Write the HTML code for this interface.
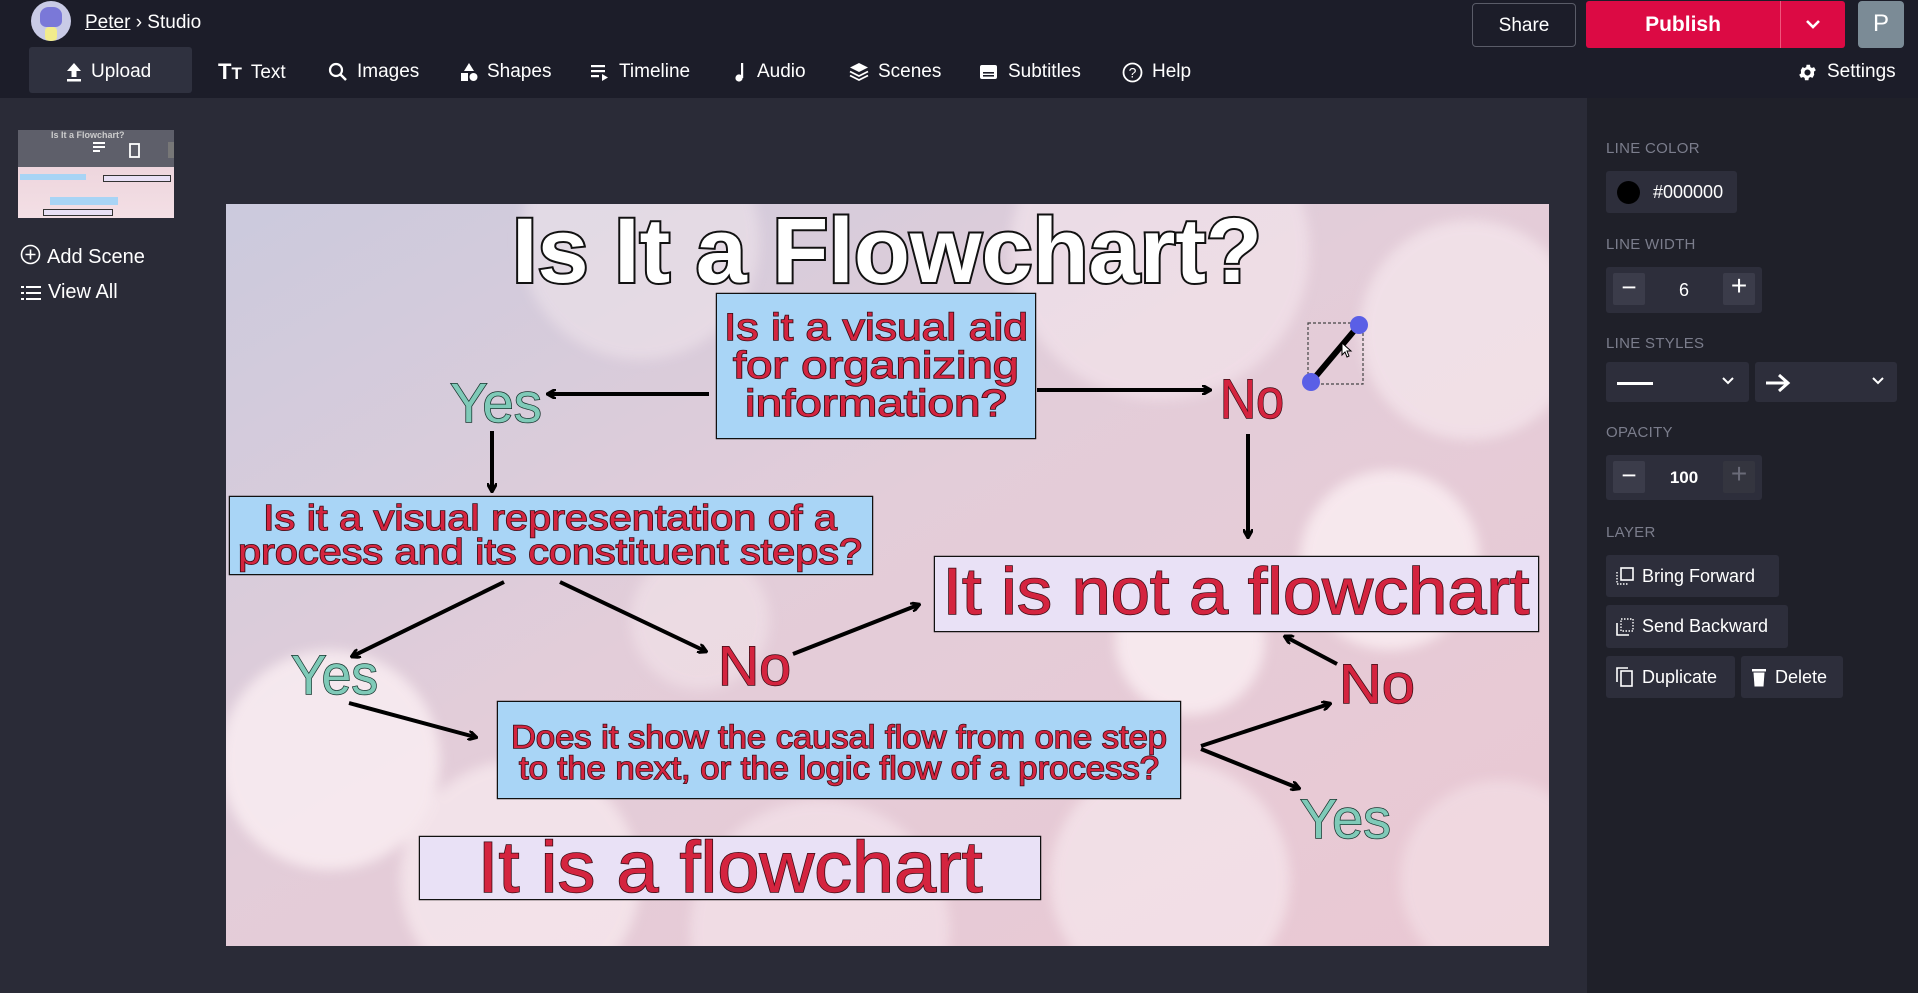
<!DOCTYPE html>
<html style="overflow:hidden;width:1918px;height:993px"><head><meta charset="utf-8"><style>
*{box-sizing:border-box;margin:0;padding:0}
body{width:1918px;height:993px;overflow:hidden;background:#2a2b37;font-family:"Liberation Sans","DejaVu Sans",sans-serif;color:#fff;position:relative}
.top{position:absolute;left:0;top:0;width:1918px;height:98px;background:#1c1d29}
.abs{position:absolute}
.menu{position:absolute;top:60px;font-size:19px;color:#fff;display:flex;align-items:center;gap:9px;line-height:24px}
.menu svg{fill:#fff}
.rp{position:absolute;left:1587px;top:98px;width:331px;height:895px;background:#1f2029}
.lbl{position:absolute;left:1606px;font-size:15px;color:#7b7d8c;letter-spacing:.3px}
.box{position:absolute;background:#2d2e3b;border-radius:3px}
.btn{position:absolute;background:#2d2e3b;border-radius:3px;font-size:18px;display:flex;align-items:center;gap:8px;padding-left:10px}
.sq{position:absolute;width:32px;height:32px;background:#3b3c4a;border-radius:2px;top:6px}
</style></head><body>
<div class="top"></div>
<div class="abs" style="left:31px;top:1px;width:40px;height:40px;border-radius:50%;background:#c9cbe6;overflow:hidden">
<div class="abs" style="left:9px;top:6px;width:22px;height:20px;background:#7a78d8;border-radius:40% 40% 30% 30%"></div>
<div class="abs" style="left:14px;top:26px;width:12px;height:14px;background:#f2ec8c;border-radius:4px"></div>
</div>
<div class="abs" style="left:85px;top:12px;font-size:19px"><span style="text-decoration:underline">Peter</span> › Studio</div>
<div class="abs" style="left:29px;top:47px;width:163px;height:46px;background:#2f313f;border-radius:3px"></div>
<div class="menu" style="left:66px"><svg width="16" height="20" viewBox="0 0 16 20"><path d="M8 1 L15 9 H10.5 V15 H5.5 V9 H1Z"/><rect x="1" y="17" width="14" height="2.5"/></svg>Upload</div>
<div class="menu" style="left:218px"><span style="font-weight:bold;font-size:22px">T<span style="font-size:17px">T</span></span>Text</div>
<div class="menu" style="left:328px"><svg width="20" height="20" viewBox="0 0 20 20"><circle cx="8" cy="8" r="6" fill="none" stroke="#fff" stroke-width="2.2"/><path d="M12 12 L18 18" stroke="#fff" stroke-width="2.5"/></svg>Images</div>
<div class="menu" style="left:460px"><svg width="18" height="20" viewBox="0 0 18 20"><path d="M9 1 L14 9 H4Z"/><rect x="1" y="11" width="7" height="8"/><circle cx="13.5" cy="15" r="4"/></svg>Shapes</div>
<div class="menu" style="left:590px"><svg width="20" height="20" viewBox="0 0 20 20"><rect x="1" y="3" width="14" height="2.2"/><rect x="1" y="8" width="14" height="2.2"/><rect x="1" y="13" width="8" height="2.2"/><path d="M12 12 L18 15.5 L12 19Z"/></svg>Timeline</div>
<div class="menu" style="left:734px"><svg width="14" height="20" viewBox="0 0 14 20"><rect x="7" y="1" width="2.2" height="15"/><circle cx="5" cy="16" r="3.6"/></svg>Audio</div>
<div class="menu" style="left:849px"><svg width="20" height="20" viewBox="0 0 20 20"><path d="M10 1 L19 5.5 L10 10 L1 5.5Z"/><path d="M1 9.5 L10 14 L19 9.5 M1 13.5 L10 18 L19 13.5" fill="none" stroke="#fff" stroke-width="1.8"/></svg>Scenes</div>
<div class="menu" style="left:979px"><svg width="20" height="18" viewBox="0 0 20 18"><rect x="1" y="2" width="17" height="14" rx="2"/><rect x="4" y="9" width="11" height="1.6" fill="#1c1d29"/><rect x="4" y="12" width="11" height="1.6" fill="#1c1d29"/></svg>Subtitles</div>
<div class="menu" style="left:1122px"><svg width="21" height="21" viewBox="0 0 21 21"><circle cx="10.5" cy="10.5" r="9" fill="none" stroke="#fff" stroke-width="1.8"/><text x="10.5" y="15.5" font-size="14" text-anchor="middle" fill="#fff" font-family="Liberation Sans">?</text></svg>Help</div>
<div class="menu" style="left:1797px"><svg width="21" height="21" viewBox="0 0 24 24"><path fill="#fff" d="M19.4 13a7.5 7.5 0 0 0 0-2l2.1-1.6-2-3.5-2.5 1a7 7 0 0 0-1.7-1l-.4-2.7h-4l-.4 2.7a7 7 0 0 0-1.7 1l-2.5-1-2 3.5L4.6 11a7.5 7.5 0 0 0 0 2l-2.1 1.6 2 3.5 2.5-1a7 7 0 0 0 1.7 1l.4 2.7h4l.4-2.7a7 7 0 0 0 1.7-1l2.5 1 2-3.5zM12 15.5A3.5 3.5 0 1 1 12 8.5a3.5 3.5 0 0 1 0 7z"/></svg>Settings</div>
<div class="abs" style="left:1472px;top:3px;width:104px;height:44px;border:1.5px solid #5a5c68;border-radius:4px;font-size:19px;text-align:center;line-height:43px">Share</div>
<div class="abs" style="left:1586px;top:1px;width:259px;height:47px;background:#dc0a44;border-radius:3px"></div>
<div class="abs" style="left:1780px;top:1px;width:1px;height:47px;background:#f0557c"></div>
<div class="abs" style="left:1586px;top:13px;width:194px;text-align:center;font-size:21px;font-weight:bold">Publish</div>
<svg class="abs" style="left:1805px;top:18px" width="16" height="12" viewBox="0 0 16 12"><path d="M2 3 L8 9 L14 3" fill="none" stroke="#fff" stroke-width="2.6"/></svg>
<div class="abs" style="left:1858px;top:1px;width:46px;height:47px;background:#7b8b96;border-radius:4px;font-size:24px;text-align:center;line-height:45px">P</div>
<div class="abs" style="left:18px;top:130px;width:156px;height:88px;background:linear-gradient(#eacfd8,#f3dfe5);overflow:hidden">
<div class="abs" style="left:0;top:0;width:156px;height:37px;background:#5e5f6a"></div>
<div class="abs" style="left:33px;top:0;font-size:9px;color:#ccc;font-weight:bold">Is It a Flowchart?</div>
<div class="abs" style="left:2px;top:44px;width:66px;height:6px;background:#a8d4f5"></div>
<div class="abs" style="left:85px;top:45px;width:68px;height:7px;background:#e8e0f5;border:1px solid #333"></div>
<div class="abs" style="left:32px;top:67px;width:68px;height:8px;background:#a8d4f5"></div>
<div class="abs" style="left:25px;top:79px;width:70px;height:7px;background:#e8e0f5;border:1px solid #333"></div>
<svg class="abs" style="left:60px;top:8px" width="100" height="24"><g fill="#fff"><rect x="15" y="4" width="12" height="2"/><rect x="15" y="8" width="12" height="2"/><rect x="15" y="12" width="7" height="2"/></g><rect x="52" y="6" width="9" height="13" fill="none" stroke="#fff" stroke-width="1.8"/><rect x="90" y="4" width="12" height="16" fill="#777"/></svg>
</div>
<div class="abs" style="left:20px;top:240px;font-size:20px;display:flex;gap:6px;align-items:center"><svg width="21" height="21"><circle cx="10.5" cy="10.5" r="9" fill="none" stroke="#fff" stroke-width="1.6"/><path d="M10.5 5.5v10M5.5 10.5h10" stroke="#fff" stroke-width="1.6"/></svg><span style="margin-top:6px">Add Scene</span></div>
<div class="abs" style="left:21px;top:281px;font-size:20px;display:flex;gap:7px;align-items:center"><svg width="20" height="18"><g fill="#fff"><rect x="0" y="2" width="3" height="2"/><rect x="5" y="2" width="15" height="2"/><rect x="0" y="8" width="3" height="2"/><rect x="5" y="8" width="15" height="2"/><rect x="0" y="14" width="3" height="2"/><rect x="5" y="14" width="15" height="2"/></g></svg>View All</div>
<div class="rp"></div>
<div class="lbl" style="top:140px">LINE COLOR</div>
<div class="box" style="left:1606px;top:171px;width:131px;height:42px"></div>
<div class="abs" style="left:1617px;top:181px;width:23px;height:23px;border-radius:50%;background:#000"></div>
<div class="abs" style="left:1653px;top:182px;font-size:18px">#000000</div>
<div class="lbl" style="top:236px">LINE WIDTH</div>
<div class="box" style="left:1606px;top:267px;width:156px;height:46px"><div class="sq" style="left:7px"></div><div class="sq" style="left:117px"></div></div>
<div class="abs" style="left:1613px;top:272px;width:32px;font-size:26px;text-align:center">−</div>
<div class="abs" style="left:1606px;top:280px;width:156px;font-size:18px;text-align:center">6</div>
<div class="abs" style="left:1723px;top:270px;width:32px;font-size:28px;text-align:center">+</div>
<div class="lbl" style="top:335px">LINE STYLES</div>
<div class="box" style="left:1606px;top:362px;width:143px;height:40px"></div>
<div class="abs" style="left:1617px;top:382px;width:36px;height:3px;background:#fff"></div>
<svg class="abs" style="left:1721px;top:376px" width="14" height="10"><path d="M2 2 L7 7 L12 2" fill="none" stroke="#fff" stroke-width="2"/></svg>
<div class="box" style="left:1755px;top:362px;width:142px;height:40px"></div>
<svg class="abs" style="left:1764px;top:372px" width="28" height="22"><path d="M2 11 H24 M15 3 L24 11 L15 19" fill="none" stroke="#fff" stroke-width="3"/></svg>
<svg class="abs" style="left:1871px;top:376px" width="14" height="10"><path d="M2 2 L7 7 L12 2" fill="none" stroke="#fff" stroke-width="2"/></svg>
<div class="lbl" style="top:424px">OPACITY</div>
<div class="box" style="left:1606px;top:455px;width:156px;height:45px"><div class="sq" style="left:7px"></div><div class="sq" style="left:117px;background:#34353f"></div></div>
<div class="abs" style="left:1613px;top:460px;width:32px;font-size:26px;text-align:center">−</div>
<div class="abs" style="left:1606px;top:468px;width:156px;font-size:17px;font-weight:bold;text-align:center">100</div>
<div class="abs" style="left:1723px;top:458px;width:32px;font-size:28px;text-align:center;color:#6a6b78">+</div>
<div class="lbl" style="top:524px">LAYER</div>
<div class="btn" style="left:1606px;top:555px;width:173px;height:42px"><svg width="18" height="18"><rect x="5" y="1" width="12" height="12" fill="none" stroke="#fff" stroke-width="1.6"/><path d="M1 5v12h12" fill="none" stroke="#fff" stroke-width="1.4" stroke-dasharray="1.5 1.5"/></svg>Bring Forward</div>
<div class="btn" style="left:1606px;top:605px;width:182px;height:43px"><svg width="18" height="18"><rect x="5" y="1" width="12" height="12" fill="none" stroke="#fff" stroke-width="1.4" stroke-dasharray="1.5 1.5"/><path d="M1 5v12h12" fill="none" stroke="#fff" stroke-width="1.6"/></svg>Send Backward</div>
<div class="btn" style="left:1606px;top:656px;width:129px;height:42px"><svg width="18" height="20"><rect x="5" y="4" width="11" height="15" fill="none" stroke="#fff" stroke-width="1.6"/><path d="M1 15V1h11" fill="none" stroke="#fff" stroke-width="1.6"/></svg>Duplicate</div>
<div class="btn" style="left:1741px;top:656px;width:102px;height:42px"><svg width="16" height="20"><rect x="1" y="2" width="14" height="2.5" fill="#fff"/><path d="M2.5 5.5h11l-1 14h-9z" fill="#fff"/></svg>Delete</div>
<svg class="abs" style="left:0;top:0;display:block" width="1918" height="993" viewBox="0 0 1918 993">
<defs>
<linearGradient id="bg" x1="0" y1="0" x2="1" y2="1"><stop offset="0" stop-color="#cbcadd"/><stop offset=".45" stop-color="#e3cdd9"/><stop offset="1" stop-color="#eac8d3"/></linearGradient>
<filter id="bl" x="-50%" y="-50%" width="200%" height="200%"><feGaussianBlur stdDeviation="6"/></filter>
<clipPath id="cc"><rect x="226" y="204" width="1323" height="742"/></clipPath>
<marker id="ah" markerWidth="10" markerHeight="10" refX="7" refY="5" orient="auto" markerUnits="userSpaceOnUse"><path d="M0 0 L9 5 L0 10" fill="none" stroke="#000" stroke-width="3"/></marker>
</defs>
<rect x="226" y="204" width="1323" height="742" fill="url(#bg)"/>
<g clip-path="url(#cc)" fill="#fbeff3" opacity=".8" filter="url(#bl)">
<circle cx="640" cy="240" r="120" opacity=".5"/>
<circle cx="1160" cy="250" r="150" opacity=".6"/>
<circle cx="1470" cy="330" r="110" opacity=".7"/>
<circle cx="1390" cy="560" r="90"/>
<circle cx="1190" cy="640" r="75"/>
<circle cx="330" cy="760" r="110"/>
<circle cx="520" cy="880" r="120" opacity=".8"/>
<circle cx="820" cy="930" r="130" opacity=".6"/>
<circle cx="1170" cy="880" r="120" opacity=".7"/>
<circle cx="1500" cy="880" r="100" opacity=".5"/>
<circle cx="700" cy="620" r="70" opacity=".5"/>
</g>
<g font-family="Liberation Sans, sans-serif" font-weight="bold" paint-order="stroke">
<text x="887" y="282" font-size="92" text-anchor="middle" fill="#fff" stroke="#111" stroke-width="4" textLength="750" lengthAdjust="spacingAndGlyphs">Is It a Flowchart?</text>
<rect x="717" y="294" width="318" height="144" fill="#a9d5f6" stroke="#111" stroke-width="2.5"/>
<g fill="#d4243f" stroke="#3a0d16" stroke-width="1.5" font-size="38" text-anchor="middle" font-weight="normal">
<text x="876" y="340" textLength="304" lengthAdjust="spacingAndGlyphs">Is it a visual aid</text>
<text x="876" y="378" textLength="286" lengthAdjust="spacingAndGlyphs">for organizing</text>
<text x="876" y="416" textLength="262" lengthAdjust="spacingAndGlyphs">information?</text>
</g>
<rect x="230" y="497" width="642" height="77" fill="#a9d5f6" stroke="#111" stroke-width="2.5"/>
<g fill="#d4243f" stroke="#3a0d16" stroke-width="1.5" font-size="36" text-anchor="middle" font-weight="normal">
<text x="550" y="530" textLength="574" lengthAdjust="spacingAndGlyphs">Is it a visual representation of a</text>
<text x="550" y="564" textLength="624" lengthAdjust="spacingAndGlyphs">process and its constituent steps?</text>
</g>
<rect x="935" y="557" width="603" height="74" fill="#e9e1f6" stroke="#111" stroke-width="2.5"/>
<text x="1236" y="614" fill="#d4243f" stroke="#3a0d16" stroke-width="1.5" font-size="66" text-anchor="middle" font-weight="normal" textLength="587" lengthAdjust="spacingAndGlyphs">It is not a flowchart</text>
<rect x="498" y="702" width="682" height="96" fill="#a9d5f6" stroke="#111" stroke-width="2.5"/>
<g fill="#d4243f" stroke="#3a0d16" stroke-width="1.5" font-size="32" text-anchor="middle" font-weight="normal">
<text x="839" y="748" textLength="656" lengthAdjust="spacingAndGlyphs">Does it show the causal flow from one step</text>
<text x="839" y="779" textLength="640" lengthAdjust="spacingAndGlyphs">to the next, or the logic flow of a process?</text>
</g>
<rect x="420" y="837" width="620" height="62" fill="#e9e1f6" stroke="#111" stroke-width="2.5"/>
<text x="730" y="892" fill="#d4243f" stroke="#3a0d16" stroke-width="1.5" font-size="72" text-anchor="middle" font-weight="normal" textLength="505" lengthAdjust="spacingAndGlyphs">It is a flowchart</text>
<g fill="#7fcab8" stroke="#17332d" stroke-width="1.5" font-size="56" font-weight="normal">
<text x="450" y="422" textLength="92" lengthAdjust="spacingAndGlyphs">Yes</text>
<text x="291" y="694" textLength="87" lengthAdjust="spacingAndGlyphs">Yes</text>
<text x="1300" y="838" textLength="91" lengthAdjust="spacingAndGlyphs">Yes</text>
</g>
<g fill="#d4243f" stroke="#3a0d16" stroke-width="1.5" font-size="56" font-weight="normal">
<text x="1220" y="418" textLength="64" lengthAdjust="spacingAndGlyphs">No</text>
<text x="718" y="685" textLength="73" lengthAdjust="spacingAndGlyphs">No</text>
<text x="1339" y="703" textLength="76" lengthAdjust="spacingAndGlyphs">No</text>
</g>
</g>
<g stroke="#000" stroke-width="4" marker-end="url(#ah)" fill="none">
<line x1="709" y1="394" x2="549" y2="394"/>
<line x1="1037" y1="390" x2="1209" y2="390"/>
<line x1="492" y1="431" x2="492" y2="490"/>
<line x1="1248" y1="434" x2="1248" y2="536"/>
<line x1="504" y1="582" x2="353" y2="656"/>
<line x1="560" y1="582" x2="705" y2="651"/>
<line x1="793" y1="654" x2="918" y2="605"/>
<line x1="349" y1="703" x2="475" y2="737"/>
<line x1="1201" y1="746" x2="1329" y2="704"/>
<line x1="1201" y1="749" x2="1298" y2="788"/>
<line x1="1337" y1="664" x2="1286" y2="637"/>
</g>
<rect x="1308" y="323" width="55" height="61" fill="none" stroke="#444" stroke-width="1.2" stroke-dasharray="3 2"/>
<line x1="1311" y1="382" x2="1359" y2="325" stroke="#000" stroke-width="6"/>
<circle cx="1359" cy="325" r="9" fill="#5a5fe6"/>
<circle cx="1311" cy="382" r="9" fill="#5a5fe6"/>
<path d="M1342 343 v12 l3 -3 l2 5 l2 -1 l-2 -5 h4z" fill="#fff" stroke="#000" stroke-width="1"/>
</svg>
</body></html>
